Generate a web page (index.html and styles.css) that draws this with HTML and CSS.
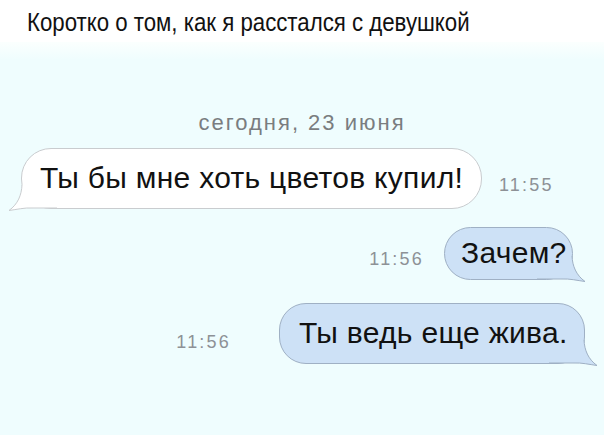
FILE: index.html
```html
<!DOCTYPE html>
<html lang="ru">
<head>
<meta charset="utf-8">
<link rel="stylesheet" href="styles.css">
</head>
<body>
<div class="page">
  <header class="title"><span class="title-text">Коротко о том, как я расстался с девушкой</span></header>
  <main class="chat">
    <div class="date">сегодня, 23 июня</div>
    <div class="row row-in">
      <div class="bubble in">
        <svg class="tail tail-in" width="50" height="27" viewBox="0 0 50 27"><path d="M15,0 C14.5,10 11,19 2,25.5 C10,24.5 17,22.5 26,23 L50,23 L50,0 Z" fill="#fff"/><path d="M15,0 C14.5,10 11,19 2,25.5 C10,24.5 17,22.5 26,23 L50,23" fill="none" stroke="#c9cccf" stroke-width="1"/></svg>
        <span class="msg">Ты бы мне хоть цветов купил!</span>
      </div>
      <span class="time time-in">11:55</span>
    </div>
    <div class="row row-out row-1">
      <span class="time">11:56</span>
      <div class="bubble out b1">
        <svg class="tail tail-out" width="50" height="27" viewBox="0 0 50 27"><path d="M35,0 C35.5,10 39,19 48,25.5 C40,24.5 33,22.5 24,23 L0,23 L0,0 Z" fill="#cde1f6"/><path d="M35,0 C35.5,10 39,19 48,25.5 C40,24.5 33,22.5 24,23 L0,23" fill="none" stroke="#9fb0c4" stroke-width="1"/></svg>
        <span class="msg">Зачем?</span>
      </div>
    </div>
    <div class="row row-out row-2">
      <span class="time">11:56</span>
      <div class="bubble out b2">
        <svg class="tail tail-out" width="50" height="27" viewBox="0 0 50 27"><path d="M35,0 C35.5,10 39,19 48,25.5 C40,24.5 33,22.5 24,23 L0,23 L0,0 Z" fill="#cde1f6"/><path d="M35,0 C35.5,10 39,19 48,25.5 C40,24.5 33,22.5 24,23 L0,23" fill="none" stroke="#9fb0c4" stroke-width="1"/></svg>
        <span class="msg">Ты ведь еще жива.</span>
      </div>
    </div>
  </main>
</div>
</body>
</html>
```
FILE: styles.css
```css
* { box-sizing: border-box; }
html, body { margin: 0; padding: 0; }
body {
  width: 604px;
  height: 435px;
  overflow: hidden;
  font-family: "Liberation Sans", Arial, sans-serif;
  background: #effdfe;
}
.page {
  width: 604px;
  height: 435px;
  display: flex;
  flex-direction: column;
}
.title {
  height: 42px;
  background: #fff;
  padding-left: 27px;
  padding-top: 7px;
  font-size: 26px;
  color: #111;
  white-space: nowrap;
}
.title-text {
  display: inline-block;
  transform: scaleX(0.855);
  transform-origin: left center;
}
.chat {
  flex: 1;
  background: linear-gradient(#fbfffe 0, #effdfe 18px, #effdfe 100%);
  display: flex;
  flex-direction: column;
  padding-top: 68px;
}
.date {
  text-align: center;
  font-size: 22px;
  letter-spacing: 2px;
  color: #7a7d80;
  line-height: 26px;
  height: 26px;
}
.row {
  display: flex;
  align-items: center;
}
.row-in {
  margin-top: 12px;
  padding-left: 21px;
}
.row-out {
  justify-content: flex-end;
}
.bubble {
  position: relative;
  font-size: 30px;
  letter-spacing: 0.3px;
  color: #111;
  white-space: nowrap;
  line-height: 34px;
}
.msg {
  position: relative;
  z-index: 1;
}
.in {
  background: #fff;
  border: 1px solid #c9cccf;
  border-radius: 30px;
  height: 61px;
  padding: 12px 18px 0 18px;
  width: 461px;
}
.out {
  background: #cde1f6;
  border: 1px solid #9fb0c4;
  border-radius: 27px;
}
.time {
  font-size: 18px;
  letter-spacing: 2.2px;
  color: #8d9196;
  line-height: 20px;
}
.time-in { margin-left: 17px; margin-top: 12px; }
.row-1 { margin-top: 18px; padding-right: 31px; }
.row-1 .time { margin-right: 20px; margin-top: 10px; }
.b1 { width: 129px; height: 53px; padding: 8px 0 0 16px; }
.row-2 { margin-top: 23px; padding-right: 19px; }
.row-2 .time { margin-right: 48px; margin-top: 17px; }
.b2 { width: 306px; height: 61px; padding: 12px 0 0 19px; }
.tail { position: absolute; bottom: -4px; z-index: 0; }
.tail-in { left: -15px; }
.tail-out { right: -15px; }
```
